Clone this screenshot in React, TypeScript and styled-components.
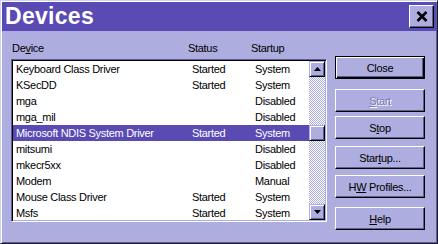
import React from 'react';
import styled, {createGlobalStyle} from 'styled-components';

const face = '#adaddf';
const caption = '#5a4bb4';

const GlobalStyle = createGlobalStyle`
  html, body {
    margin: 0;
    padding: 0;
    background: ${face};
  }
  * {
    box-sizing: border-box;
  }
`;

type Device = {name: string; status: string; startup: string};

const devices: Device[] = [
  {name: 'Keyboard Class Driver', status: 'Started', startup: 'System'},
  {name: 'KSecDD', status: 'Started', startup: 'System'},
  {name: 'mga', status: '', startup: 'Disabled'},
  {name: 'mga_mil', status: '', startup: 'Disabled'},
  {name: 'Microsoft NDIS System Driver', status: 'Started', startup: 'System'},
  {name: 'mitsumi', status: '', startup: 'Disabled'},
  {name: 'mkecr5xx', status: '', startup: 'Disabled'},
  {name: 'Modem', status: '', startup: 'Manual'},
  {name: 'Mouse Class Driver', status: 'Started', startup: 'System'},
  {name: 'Msfs', status: 'Started', startup: 'System'},
];

const SELECTED = 4;

const Key = ({children}: {children: React.ReactNode}) => <u>{children}</u>;

export default function App() {
  return (
    <>
      <GlobalStyle />
      <Window>
        <TitleBar>
          <Title>Devices</Title>
          <CloseBox>
            <svg width="12" height="11" viewBox="0 0 12 11">
              <path d="M1.5 1 L10.5 10 M10.5 1 L1.5 10" stroke="#000" strokeWidth="2.6" />
            </svg>
          </CloseBox>
        </TitleBar>
        <Body>
          <ListColumn>
            <HeaderRow>
              <span>
                De<Key>v</Key>ice
              </span>
              <span>Status</span>
              <span>Startup</span>
            </HeaderRow>
            <ListBox>
              <Rows>
                {devices.map((d, i) => (
                  <Row key={d.name} $selected={i === SELECTED}>
                    <span>{d.name}</span>
                    <span>{d.status}</span>
                    <span>{d.startup}</span>
                  </Row>
                ))}
              </Rows>
              <ScrollBar>
                <ScrollButton>
                  <svg width="7" height="4" viewBox="0 0 7 4">
                    <path d="M3.5 0 L7 4 L0 4 Z" fill="#000" />
                  </svg>
                </ScrollButton>
                <Track>
                  <Thumb $offset={48} />
                </Track>
                <ScrollButton>
                  <svg width="7" height="4" viewBox="0 0 7 4">
                    <path d="M0 0 L7 0 L3.5 4 Z" fill="#000" />
                  </svg>
                </ScrollButton>
              </ScrollBar>
            </ListBox>
          </ListColumn>
          <ButtonColumn>
            <PushButton $default $mt={25}>Close</PushButton>
            <PushButton $mt={10} disabled>
              <Key>S</Key>tart
            </PushButton>
            <PushButton $mt={4}>
              S<Key>t</Key>op
            </PushButton>
            <PushButton $mt={7}>
              Star<Key>t</Key>up...
            </PushButton>
            <PushButton $mt={6}>
              H<Key>W</Key> Profiles...
            </PushButton>
            <PushButton $mt={9}>
              <Key>H</Key>elp
            </PushButton>
          </ButtonColumn>
        </Body>
      </Window>
    </>
  );
}

const Window = styled.div`
  width: 438px;
  height: 244px;
  background: ${face};
  border: 1px solid;
  border-color: #d2d2f2 #1a1a2a #1a1a2a #d2d2f2;
  box-shadow: inset 1px 1px 0 #ffffff, inset -1px -1px 0 #5f5f8f;
  padding: 1px;
  display: flex;
  flex-direction: column;
  font-family: 'Liberation Sans', Arial, sans-serif;
  font-size: 11px;
  letter-spacing: -0.3px;
  color: #000;
`;

const TitleBar = styled.div`
  height: 29px;
  background: ${caption};
  display: flex;
  align-items: center;
  justify-content: space-between;
  padding: 0 2px 0 3px;
`;

const Title = styled.div`
  color: #fff;
  font-weight: bold;
  font-size: 23px;
  letter-spacing: 0.3px;
  line-height: 1;
`;

const CloseBox = styled.div`
  width: 25px;
  height: 23px;
  margin-top: -1px;
  background: ${face};
  border: 1px solid;
  border-color: #ffffff #000 #000 #ffffff;
  box-shadow: inset -1px -1px 0 #5f5f8f;
  display: flex;
  align-items: center;
  justify-content: center;
`;

const Body = styled.div`
  flex: 1;
  display: flex;
  gap: 8px;
  padding: 0 9px;
`;

const ListColumn = styled.div`
  width: 316px;
  display: flex;
  flex-direction: column;
`;

const columns = `176px 63px 1fr`;

const HeaderRow = styled.div`
  height: 28px;
  display: grid;
  grid-template-columns: ${columns};
  align-items: end;
  padding: 0 0 4px 1px;
  line-height: 13px;
`;

const ListBox = styled.div`
  height: 163px;
  display: flex;
  background: #fff;
  border: 1px solid;
  border-color: #5f5f8f #ffffff #ffffff #5f5f8f;
  box-shadow: inset 1px 1px 0 #000, inset -1px -1px 0 ${face};
  padding: 1px;
  overflow: hidden;
`;

const Rows = styled.div`
  flex: 1;
  overflow: hidden;
`;

const Row = styled.div<{$selected?: boolean}>`
  height: 16px;
  display: grid;
  grid-template-columns: ${columns};
  align-items: center;
  padding-left: 3px;
  white-space: nowrap;
  background: ${p => (p.$selected ? caption : 'transparent')};
  color: ${p => (p.$selected ? '#fff' : '#000')};
`;

const ScrollBar = styled.div`
  width: 16px;
  display: flex;
  flex-direction: column;
`;

const ScrollButton = styled.div`
  width: 16px;
  height: 16px;
  flex: none;
  background: ${face};
  border: 1px solid;
  border-color: ${face} #000 #000 ${face};
  box-shadow: inset 1px 1px 0 #fff, inset -1px -1px 0 #5f5f8f;
  display: flex;
  align-items: center;
  justify-content: center;
`;

const Track = styled.div`
  flex: 1;
  background: repeating-conic-gradient(#ffffff 0 25%, ${face} 0 50%) 0 0 / 2px 2px;
`;

const Thumb = styled.div<{$offset: number}>`
  width: 16px;
  height: 16px;
  margin-top: ${p => p.$offset}px;
  background: ${face};
  border: 1px solid;
  border-color: ${face} #000 #000 ${face};
  box-shadow: inset 1px 1px 0 #fff, inset -1px -1px 0 #5f5f8f;
`;

const ButtonColumn = styled.div`
  width: 90px;
  display: flex;
  flex-direction: column;
`;

const PushButton = styled.button<{$default?: boolean; $mt: number}>`
  width: 90px;
  height: 23px;
  margin-top: ${p => p.$mt}px;
  padding: 0;
  font: inherit;
  letter-spacing: inherit;
  text-align: center;
  white-space: nowrap;
  color: #000;
  background: ${face};
  border: 1px solid;
  border-color: ${p => (p.$default ? '#000' : '#ffffff #000 #000 #ffffff')};
  box-shadow: ${p =>
    p.$default
      ? 'inset 1px 1px 0 #fff, inset -1px -1px 0 #000, inset -2px -2px 0 #5f5f8f'
      : 'inset -1px -1px 0 #5f5f8f'};

  &:disabled {
    color: #7c7cb4;
    text-shadow: 1px 1px 0 #ffffff;
  }
`;
